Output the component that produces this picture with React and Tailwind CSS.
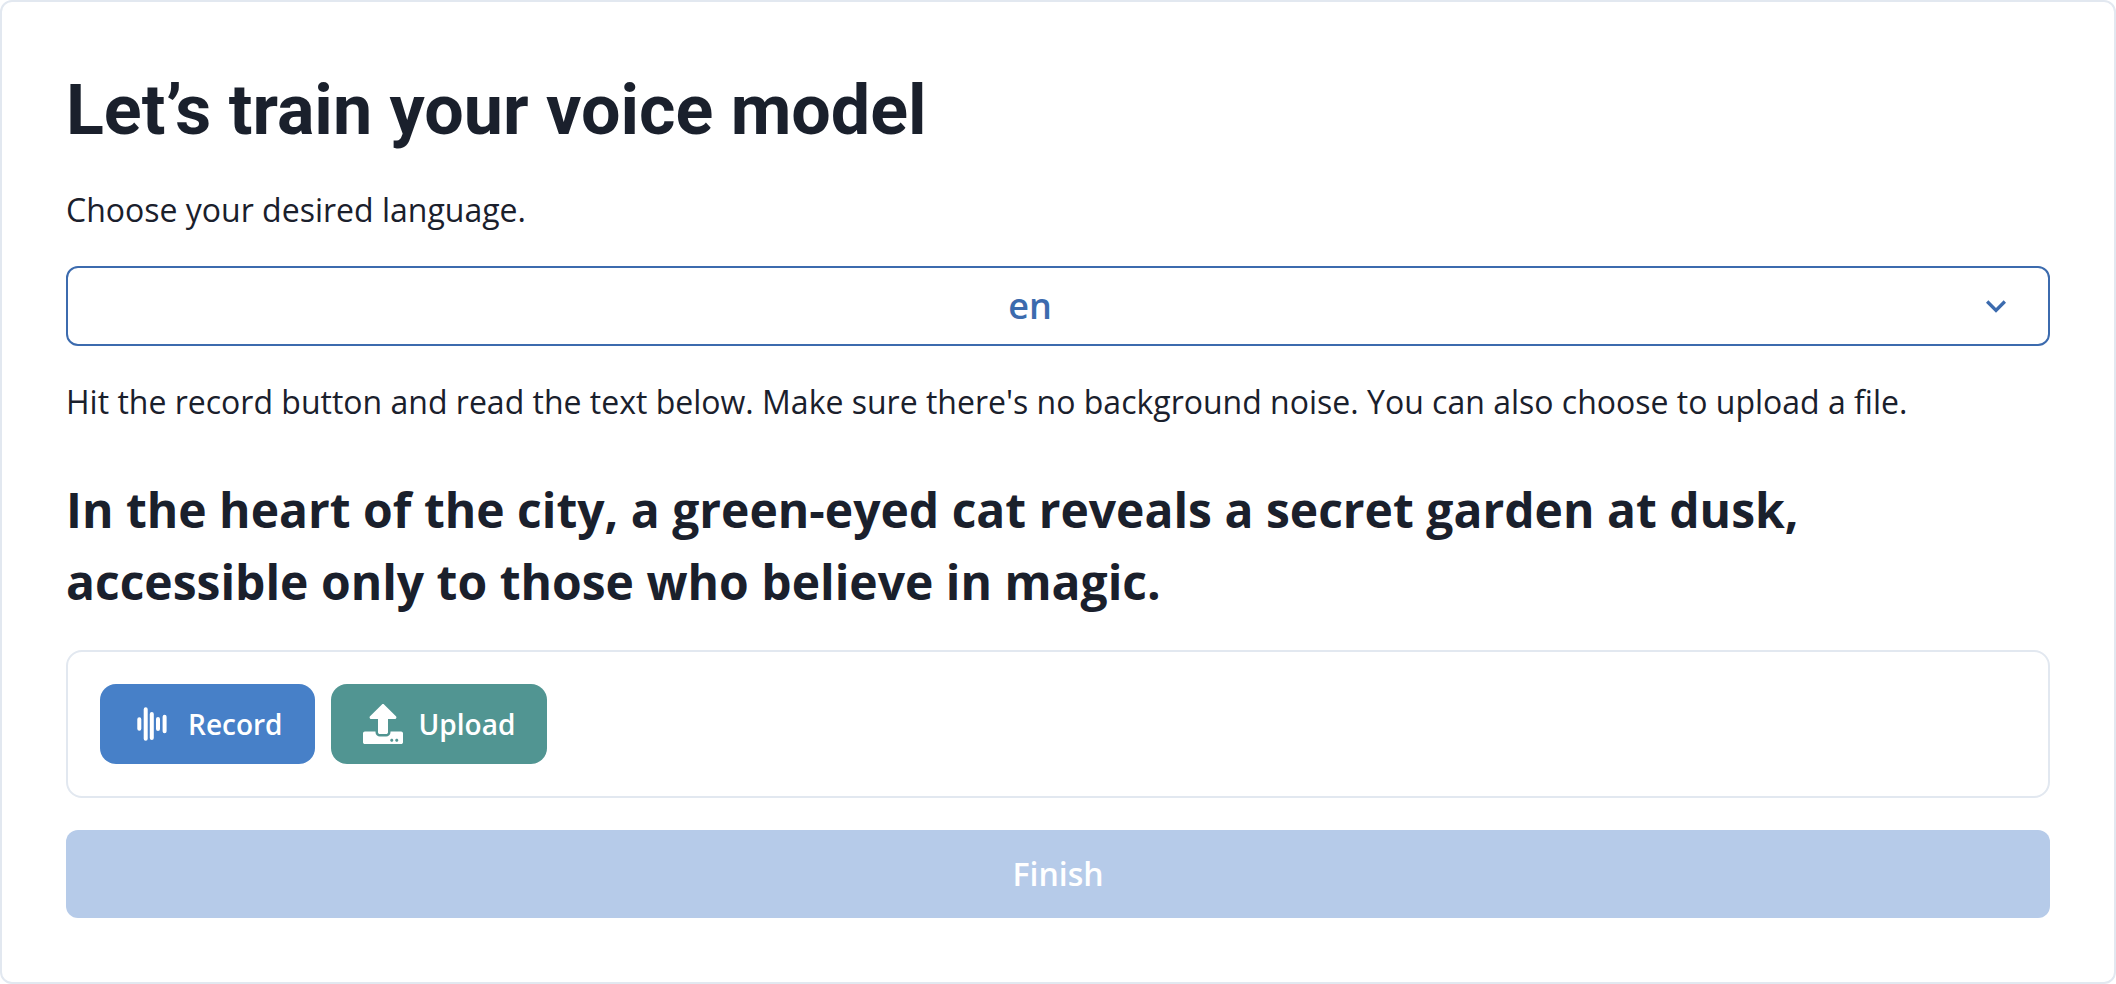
import React from "react";

function WaveIcon() {
  return (
    <svg aria-hidden="true" viewBox="0 0 40 40" className="size-10" stroke="currentColor" strokeWidth="4" strokeLinecap="round">
      <path d="M7.300 15.300v9.400M13.700 5.300v29.500M19.800 10v24M26 15v10M32.600 12.700v14.600" />
    </svg>
  );
}

function UploadIcon() {
  return (
    <svg aria-hidden="true" viewBox="0 0 512 512" className="size-10" fill="currentColor">
      <path d="M296 384h-80c-13.300 0-24-10.700-24-24V192h-87.700c-17.800 0-26.700-21.500-14.100-34.100L242.300 5.700c7.500-7.500 19.800-7.500 27.300 0l152.200 152.200c12.600 12.600 3.700 34.100-14.100 34.100H320v168c0 13.300-10.700 24-24 24zm216-8v112c0 13.300-10.700 24-24 24H24c-13.300 0-24-10.700-24-24V376c0-13.300 10.700-24 24-24h136v8c0 30.900 25.100 56 56 56h80c30.900 0 56-25.100 56-56v-8h136c13.300 0 24 10.700 24 24zm-124 88c0-11-9-20-20-20s-20 9-20 20 9 20 20 20 20-9 20-20zm64 0c0-11-9-20-20-20s-20 9-20 20 9 20 20 20 20-9 20-20z" />
    </svg>
  );
}

export default function App() {
  return (
    <main className="rounded-xl border-2 border-[#e2e8f0] bg-white p-16 font-['Open_Sans',sans-serif] text-[32px] leading-[48px] text-[#1a202c]">
      <h1 className="font-['Roboto',sans-serif] text-[70px] leading-[88px] font-bold">Let’s train your voice model</h1>
      <label htmlFor="language" className="mt-8 block">Choose your desired language.</label>
      <div className="mt-8 grid items-center">
        <select id="language" defaultValue="en" className="col-start-1 row-start-1 h-20 w-full appearance-none rounded-xl border-2 border-[#3c6bae] bg-white pr-[88px] pl-8 text-center text-[36px] font-semibold text-[#3c6bae] [text-align-last:center]">
          <option>en</option>
        </select>
        <svg aria-hidden="true" viewBox="0 0 24 24" className="pointer-events-none col-start-1 row-start-1 mr-[34px] size-10 justify-self-end text-[#3c6bae]" fill="currentColor">
          <path d="M16.590 8.590 12 13.170 7.410 8.590 6 10l6 6 6-6z" />
        </svg>
      </div>
      <p className="mt-8">Hit the record button and read the text below. Make sure there's no background noise. You can also choose to upload a file.</p>
      <h2 className="mt-12 text-[48px] leading-[72px] font-bold">In the heart of the city, a green-eyed cat reveals a secret garden at dusk, accessible only to those who believe in magic.</h2>
      <div className="mt-8 flex gap-4 rounded-2xl border-2 border-[#e2e8f0] p-8">
        <button className="flex h-20 items-center gap-4 rounded-2xl bg-[#4780c8] px-8 text-[28px] font-semibold text-white"><WaveIcon />Record</button>
        <button className="flex h-20 items-center gap-4 rounded-2xl bg-[#519592] px-8 text-[28px] font-semibold text-white"><UploadIcon />Upload</button>
      </div>
      <button disabled className="mt-8 h-[88px] w-full rounded-xl bg-[#b6cbe9] text-[32px] font-semibold text-white">Finish</button>
    </main>
  );
}
